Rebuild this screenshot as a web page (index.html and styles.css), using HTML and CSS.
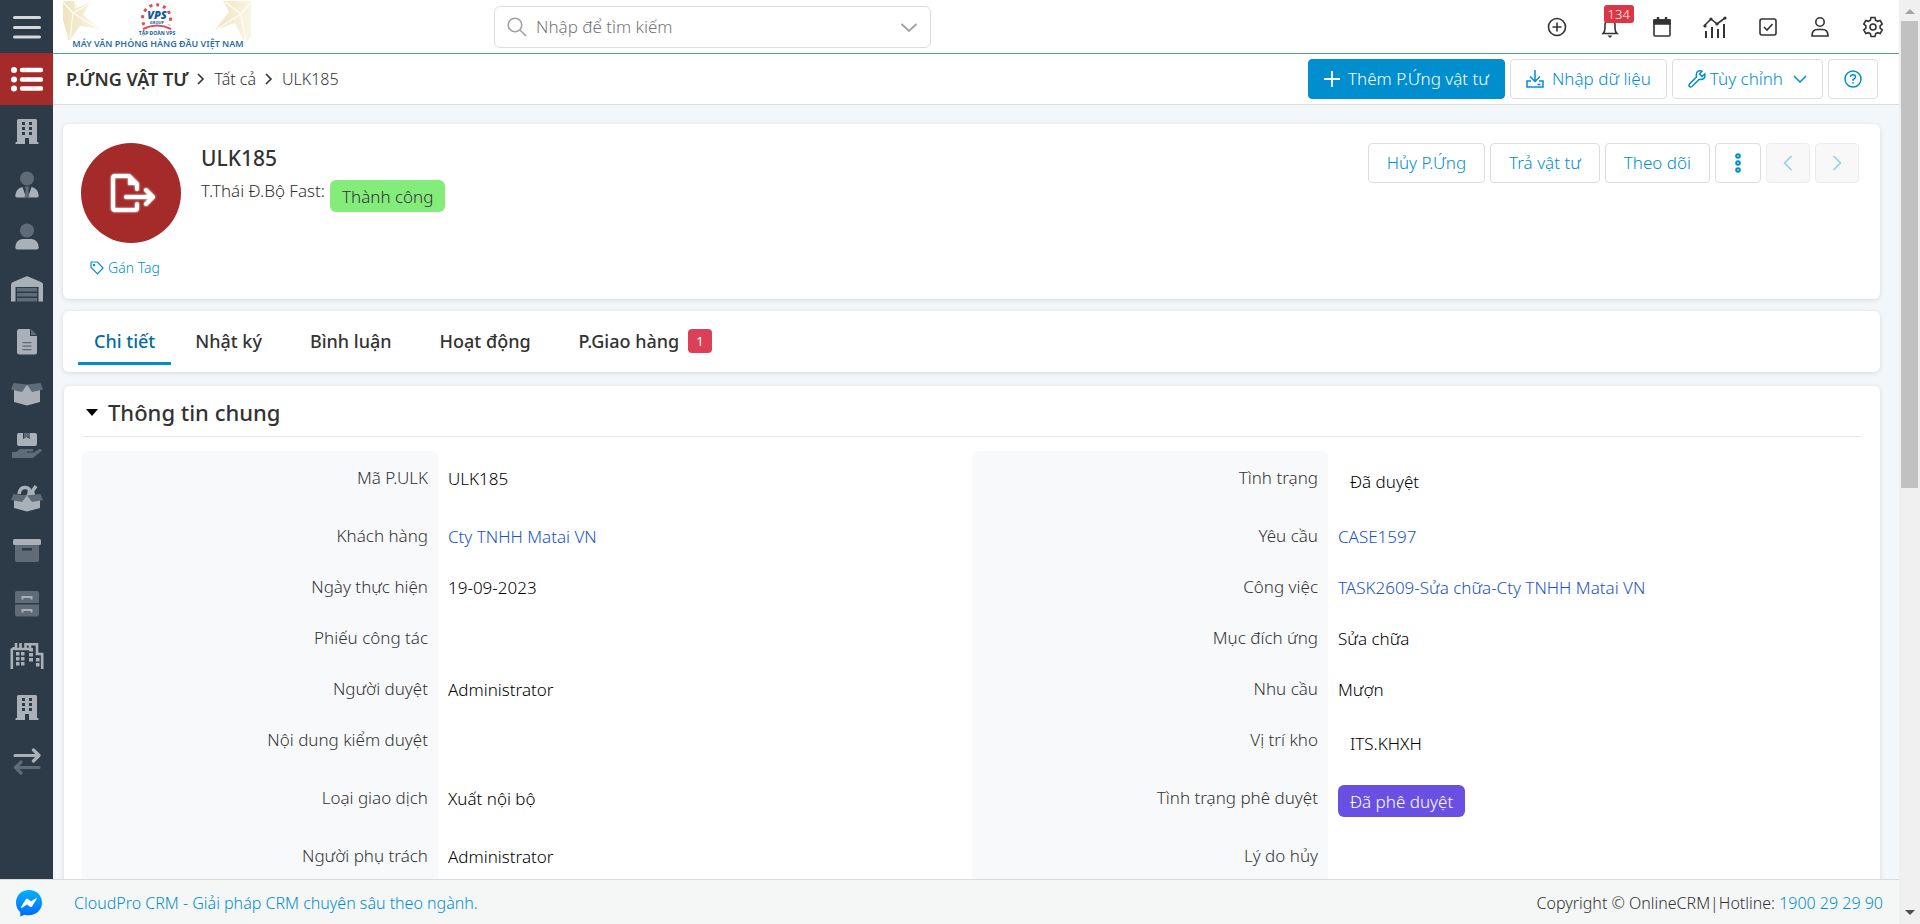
FILE: index.html
```html
<!DOCTYPE html>
<html lang="vi">
<head>
<meta charset="utf-8">
<meta name="viewport" content="width=device-width, initial-scale=1">
<title>ULK185 - P.Ứng vật tư</title>
<link rel="stylesheet" href="styles.css">
</head>
<body>
<svg class="sprite" aria-hidden="true">
  <symbol id="i-building" viewBox="0 0 24 28"><path fill="#a9b0b8" d="M2 2.500q0-1.500 1.500-1.500h17q1.500 0 1.500 1.500V24h1.500v2H14v-6h-4v6H.5v-2H2z"/><path fill="#2d3b49" d="M7 4h3v3H7zM14 4h3v3h-3zM7 9h3v3H7zM14 9h3v3h-3zM7 14h3v3H7zM14 14h3v3h-3z"/></symbol>
  <symbol id="i-tie" viewBox="0 0 24 28"><circle cx="12" cy="7.500" r="7" fill="#5f6b77"/><path fill="#a9b0b8" d="M7.500 16 11 26.500H2q-2 0-1.700-2Q1 17 7.500 16zM16.500 16 13 26.500h9q2 0 1.700-2Q23 17 16.500 16z"/><path fill="#5f6b77" d="M9.500 15.500h5l-1.300 3.500 1.300 7.500h-5l1.300-7.500z"/></symbol>
  <symbol id="i-user" viewBox="0 0 24 28"><circle cx="12" cy="7.500" r="7" fill="#5f6b77"/><path fill="#a9b0b8" d="M7 16h10q6.500 1 6.700 8.500 0 2-2 2H2.300q-2 0-2-2Q.5 17 7 16z"/></symbol>
  <symbol id="i-warehouse" viewBox="0 0 34 28"><path fill="#a9b0b8" d="M1 9.500Q1 8 2.500 7.300L16 1.500q1-.4 2 0l13.500 5.800Q33 8 33 9.500V26.500h-4.500V12h-23v14.500H1z"/><path fill="#5f6b77" d="M7 13h20v3.500H7zM7 18h20v3.500H7zM7 23h20v3.500H7z"/></symbol>
  <symbol id="i-file" viewBox="0 0 20 28"><path fill="#a9b0b8" d="M2.500 1H13v7h7v16.500q0 2-2 2H2.500q-2.500 0-2.500-2V3Q0 1 2.500 1z"/><path fill="#5f6b77" d="M14 1l6 6h-6zM5.500 14h9v1.200h-9zM5.500 17.500h9v1.200h-9zM5.500 21h9v1.200h-9z"/></symbol>
  <symbol id="i-box-open" viewBox="0 0 32 24"><path fill="#a9b0b8" d="M3 5l13-2 13 2v15l-13 3.500L3 20z"/><path fill="#5f6b77" d="M2.500 1 16 2.500l-5 7.500L0 7.500zM29.500 1 16 2.500 21 10l11-2.500z"/></symbol>
  <symbol id="i-hand" viewBox="0 0 30 28"><path fill="#a9b0b8" d="M6 1h5v6l3.500-2L18 7V1h5q2 0 2 2v9q0 2-2 2H7q-2 0-2-2V3q0-1 1-2z"/><path fill="#5f6b77" d="M12 1h6v5l-3-1.500L12 6zM0 20h4l4-3h12q2 .5 1 2.500h-6v1h7l5-3.500q2.500-.5 3 1.500L21 26H0z"/></symbol>
  <symbol id="i-box-full" viewBox="0 0 32 28"><path fill="#a9b0b8" d="M3 12l13-2 13 2v11l-13 3.500L3 23z"/><path fill="none" stroke="#a9b0b8" stroke-width="3.500" d="M8 9q1-7 6.500-6.500T18 8.500h4Q21 5 23 4l2-3"/><path fill="#5f6b77" d="M2.500 9 16 10.500l-5 6.500L0 15zM29.500 9 16 10.500 21 17l11-2z"/></symbol>
  <symbol id="i-archive" viewBox="0 0 28 26"><path fill="#5f6b77" d="M2 7h24v15q0 2-2 2H4q-2 0-2-2z"/><rect width="28" height="6" y="1" rx="1.500" fill="#a9b0b8"/><path fill="#2d3b49" d="M9 10h10v2.500H9z"/></symbol>
  <symbol id="i-cabinet" viewBox="0 0 24 28"><path fill="#5f6b77" d="M2 1h20q2 0 2 2v10H0V3q0-2 2-2zM0 14.500h24V24q0 2.500-2 2.500H2q-2 0-2-2.500z"/><path fill="none" stroke="#a9b0b8" stroke-width="2" d="M7.500 9.500V7h9v2.500M7.500 22.500V20h9v2.500"/></symbol>
  <symbol id="i-city" viewBox="0 0 34 28"><path fill="none" stroke="#a9b0b8" stroke-width="2.600" d="M1.800 27V7.500l2-1V5M6 1v6h14V2.300h7V12h5.200v15M10.500 1v5M15.500 6V2.300H20"/><path fill="#a9b0b8" d="M6 10h3.500v3.500H6zM11 10h3.500v3.500H11zM6 15h3.500v3.500H6zM11 15h3.500v3.500H11zM6 20h3.500v3.500H6zM11 20h3.500v3.500H11zM19 6h4v3.500h-4zM19 11h4v3.500h-4zM19 16h4v3.500h-4zM26 16h3.500v3.500H26zM26 21h3.500v3.500H26z"/></symbol>
  <symbol id="i-exchange" viewBox="0 0 28 28"><path fill="none" stroke="#a9b0b8" stroke-width="3.200" stroke-linecap="round" stroke-linejoin="round" d="M2 8.500h23.500M20.500 3l5.500 5.500-5.500 5.500"/><path fill="none" stroke="#5f6b77" stroke-width="3.200" stroke-linecap="round" stroke-linejoin="round" d="M26 20.500H2.500M8 15l-5.500 5.500L8 26"/></symbol>
</svg>

<div class="app">
  <div class="workspace">
    <aside class="sidebar">
      <button class="menu-button" type="button" aria-label="Menu"><svg viewBox="0 0 28 24" width="28" height="24"><path stroke="#d5d8db" stroke-width="3" stroke-linecap="round" d="M1.500 2.500h25M1.500 12.500h25M1.500 22h25"/></svg></button>
      <a class="module-active" href="#" aria-label="P.Ứng vật tư"><svg viewBox="0 0 32 26" width="32" height="26"><path stroke="#fff" stroke-width="4.400" stroke-linecap="round" d="M11 4h19M11 13.500h19M11 22.500h19"/><g fill="#fff"><circle cx="3" cy="4" r="3"/><circle cx="3" cy="13.500" r="3"/><circle cx="3" cy="22.500" r="3"/></g></svg></a>
      <nav class="modules" aria-label="Phân hệ">
        <a href="#" aria-label="Công ty"><svg width="24" height="28"><use href="#i-building"/></svg></a>
        <a href="#" aria-label="Đầu mối"><svg width="24" height="28"><use href="#i-tie"/></svg></a>
        <a href="#" aria-label="Người liên hệ"><svg width="24" height="28"><use href="#i-user"/></svg></a>
        <a href="#" aria-label="Kho"><svg width="34" height="28"><use href="#i-warehouse"/></svg></a>
        <a href="#" aria-label="Tài liệu"><svg width="20" height="28"><use href="#i-file"/></svg></a>
        <a href="#" aria-label="Sản phẩm"><svg width="32" height="24"><use href="#i-box-open"/></svg></a>
        <a href="#" aria-label="Giao hàng"><svg width="30" height="28"><use href="#i-hand"/></svg></a>
        <a href="#" aria-label="Vật tư"><svg width="32" height="28"><use href="#i-box-full"/></svg></a>
        <a href="#" aria-label="Lưu trữ"><svg width="28" height="26"><use href="#i-archive"/></svg></a>
        <a href="#" aria-label="Hồ sơ"><svg width="24" height="28"><use href="#i-cabinet"/></svg></a>
        <a href="#" aria-label="Chi nhánh"><svg width="34" height="28"><use href="#i-city"/></svg></a>
        <a href="#" aria-label="Tòa nhà"><svg width="24" height="28"><use href="#i-building"/></svg></a>
        <a href="#" aria-label="Luân chuyển"><svg width="28" height="28"><use href="#i-exchange"/></svg></a>
      </nav>
    </aside>

    <main class="main">
      <header class="topbar">
        <a class="logo" href="#" aria-label="VPS">
          <svg viewBox="0 0 188 50" width="188" height="50">
            <defs><linearGradient id="gold"><stop offset="0" stop-color="#eee3be"/><stop offset="1" stop-color="#faf6e6"/></linearGradient></defs>
            <path fill="#fbf8ea" d="M0 1h14v8L0 16zM174 1h14v22l-14-10z"/>
            <path fill="url(#gold)" d="M0 1h11l1 8 15-7-7 13 17 14-20-3-11 15L0 20z"/>
            <path fill="url(#gold)" d="M188 1h-28l6 11-14 18 20-7 10 21 6-8z"/>
            <path fill="none" stroke="#fffdf4" stroke-width="1.200" d="M10 13 0 2M10 13l16-9M10 13l24 15M10 13 7 38M178 14l10-12M178 14 162 2M178 14l-24 15M178 14l5 28"/>
            <path fill="none" stroke="#dc4d59" stroke-width="3" stroke-dasharray="3 4" d="M81 25a14 14 0 1 1 25 0"/>
            <path fill="none" stroke="#e04b57" stroke-width="2" d="M80 29q14-7 28 0"/>
            <text class="logo-vps" x="94" y="19" text-anchor="middle">VPS</text>
            <text class="logo-group" x="94" y="24" text-anchor="middle">GROUP</text>
            <text class="logo-tap" x="94" y="35" text-anchor="middle">TẬP ĐOÀN VPS</text>
            <text class="logo-slogan" x="95" y="47" text-anchor="middle">MÁY VĂN PHÒNG HÀNG ĐẦU VIỆT NAM</text>
          </svg>
        </a>
        <form class="search" role="search">
          <svg viewBox="0 0 20 20" width="20" height="20"><g fill="none" stroke="#a0a0a0" stroke-width="1.600"><circle cx="8" cy="8" r="6.800"/><path d="M13 13l6 6"/></g></svg>
          <input type="search" aria-label="Tìm kiếm" placeholder="Nhập để tìm kiếm">
          <button type="button" aria-label="Mở rộng"><svg viewBox="0 0 18 10" width="18" height="10"><path fill="none" stroke="#a0a0a0" stroke-width="1.800" d="M1.500 1 9 8l7.500-7"/></svg></button>
        </form>
        <div class="tools">
          <button type="button" aria-label="Thêm nhanh"><svg viewBox="0 0 24 24" width="24" height="24"><circle cx="12" cy="12" r="8.500"/><path d="M12 7.500v9M7.500 12h9"/></svg></button>
          <button type="button" aria-label="Thông báo"><svg viewBox="0 0 24 24" width="24" height="24"><path d="M12 2v2M5 18.500h14q-2-2-2-5V9.500a5 5 0 0 0-10 0v4q0 3-2 5z"/><path fill="#333" stroke="none" d="M9.500 20.500h5l-2.500 2.500z"/></svg><span class="count">134</span></button>
          <button type="button" aria-label="Lịch"><svg viewBox="0 0 24 24" width="24" height="24"><rect x="4" y="5" width="16" height="16" rx="1"/><path fill="#333" d="M4 5h16v4H4z"/><path stroke-width="2.400" d="M8 2v4M16 2v4"/></svg></button>
          <button type="button" aria-label="Báo cáo"><svg viewBox="0 0 24 24" width="24" height="24"><path d="M1 11 8 4l6 5 8-6"/><path stroke-width="2" d="M3 16v7M9 12v11M15 14v9M21 9v14"/><g fill="#333" stroke="none"><circle cx="2" cy="11" r="1.600"/><circle cx="8" cy="4" r="1.600"/><circle cx="14" cy="9" r="1.600"/><circle cx="22" cy="3" r="1.600"/></g></svg></button>
          <button type="button" aria-label="Công việc"><svg viewBox="0 0 24 24" width="24" height="24"><rect x="4" y="4" width="16" height="16" rx="2"/><path d="m8 12 3 3 5.500-6"/></svg></button>
          <button type="button" aria-label="Tài khoản"><svg viewBox="0 0 24 24" width="24" height="24"><circle cx="12" cy="7" r="4.200"/><path d="M4 21q0-6.500 5.500-6.500h5Q20 14.500 20 21z"/></svg></button>
          <button type="button" aria-label="Cài đặt"><svg viewBox="0 0 24 24" width="24" height="24"><circle cx="12" cy="12" r="3"/><path d="M10 2.500h4l.6 2.700 1.900 1.100 2.700-.8 2 3.500-2.100 1.900v2.200l2.100 1.900-2 3.500-2.700-.8-1.900 1.100-.6 2.700h-4l-.6-2.700-1.900-1.100-2.700.8-2-3.500 2.100-1.900v-2.200L2.800 9l2-3.500 2.700.8 1.900-1.100z"/></svg></button>
        </div>
      </header>

      <div class="pagebar">
        <nav class="crumbs" aria-label="Breadcrumb">
          <a class="crumb-module" href="#">P.ỨNG VẬT TƯ</a>
          <svg viewBox="0 0 8 14" width="8" height="14"><path d="m1 2 5 5-5 5"/></svg>
          <a href="#">Tất cả</a>
          <svg viewBox="0 0 8 14" width="8" height="14"><path d="m1 2 5 5-5 5"/></svg>
          <span>ULK185</span>
        </nav>
        <div class="actions">
          <button class="btn btn-primary" type="button"><svg viewBox="0 0 16 16" width="16" height="16"><path stroke-width="1.800" d="M8 0v16M0 8h16"/></svg>Thêm P.Ứng vật tư</button>
          <button class="btn" type="button"><svg viewBox="0 0 18 18" width="18" height="18"><path d="M9 0v11M4 6.500l5 5 5-5M5 11H1v6h16v-6h-4"/><path d="M11.500 14.500h3"/></svg>Nhập dữ liệu</button>
          <button class="btn btn-tools" type="button"><svg viewBox="0 0 18 18" width="18" height="18"><path d="M16.800 4 14 6.500 11.500 4 14 1.200Q9-.5 8.300 4.500L8.500 7 1.500 14q-1 1.500 0 2.500t2.500 0l7-7Q18 10 16.800 4z"/></svg>Tùy chỉnh<svg class="chevron" viewBox="0 0 14 8" width="14" height="8"><path d="m1 1 6 6 6-6"/></svg></button>
          <button class="btn" type="button" aria-label="Trợ giúp"><svg viewBox="0 0 18 18" width="18" height="18"><circle cx="9" cy="9" r="8"/><path d="M6.500 7Q6.700 4.800 9 4.800T11.500 7Q11.500 8.500 9 9.500v1.200M9 12.300v1.500"/></svg></button>
        </div>
      </div>

      <div class="content">
        <section class="card record">
          <div class="portrait">
            <div class="avatar"><svg viewBox="0 0 46 42" width="46" height="42"><g fill="none" stroke="#fff" stroke-width="4" stroke-linecap="round" stroke-linejoin="round"><path d="M28 17v-5L20 4H6Q4 4 4 6v30q0 2 2 2h20q2 0 2-2v-4"/><path d="M17 25h26M37 18l7 7-7 7"/></g><path fill="#fff" d="M19 4v9h10z"/></svg></div>
            <button class="tag-link" type="button"><svg viewBox="0 0 14 14" width="14" height="14"><path d="M1 2q0-1 1-1h5.500L13 7 7.500 13 1 6.500z"/><circle cx="4" cy="4" r=".6"/></svg>Gán Tag</button>
          </div>
          <div class="summary">
            <h1>ULK185</h1>
            <p>T.Thái Đ.Bộ Fast: <span class="badge badge-success">Thành công</span></p>
          </div>
          <div class="actions">
            <button class="btn" type="button">Hủy P.Ứng</button>
            <button class="btn" type="button">Trả vật tư</button>
            <button class="btn" type="button">Theo dõi</button>
            <button class="btn btn-more" type="button" aria-label="Thêm"><svg viewBox="0 0 8 20" width="8" height="20"><g stroke-width="2"><circle cx="4" cy="3" r="1.800"/><circle cx="4" cy="10" r="1.800"/><circle cx="4" cy="17" r="1.800"/></g></svg></button>
            <button class="btn btn-pager" type="button" disabled aria-label="Trước"><svg viewBox="0 0 10 16" width="10" height="16"><path d="M8.500 1 1.500 8l7 7"/></svg></button>
            <button class="btn btn-pager" type="button" disabled aria-label="Sau"><svg viewBox="0 0 10 16" width="10" height="16"><path d="m1.500 1 7 7-7 7"/></svg></button>
          </div>
        </section>

        <nav class="card tabs" aria-label="Nội dung">
          <a class="tab tab-active" href="#">Chi tiết</a>
          <a class="tab" href="#">Nhật ký</a>
          <a class="tab" href="#">Bình luận</a>
          <a class="tab" href="#">Hoạt động</a>
          <a class="tab" href="#">P.Giao hàng<span class="tab-count">1</span></a>
        </nav>

        <section class="card details">
          <h2><button type="button"><svg viewBox="0 0 12 7" width="12" height="7"><path fill="#000" d="M0 0h12L6 7z"/></svg>Thông tin chung</button></h2>
          <table class="fields">
            <tbody>
              <tr><th scope="row">Mã P.ULK</th><td>ULK185</td><th scope="row">Tình trạng</th><td class="has-badge"><span class="badge">Đã duyệt</span></td></tr>
              <tr><th scope="row">Khách hàng</th><td><a href="#">Cty TNHH Matai VN</a></td><th scope="row">Yêu cầu</th><td><a href="#">CASE1597</a></td></tr>
              <tr><th scope="row">Ngày thực hiện</th><td>19-09-2023</td><th scope="row">Công việc</th><td><a href="#">TASK2609-Sửa chữa-Cty TNHH Matai VN</a></td></tr>
              <tr><th scope="row">Phiếu công tác</th><td></td><th scope="row">Mục đích ứng</th><td>Sửa chữa</td></tr>
              <tr><th scope="row">Người duyệt</th><td>Administrator</td><th scope="row">Nhu cầu</th><td>Mượn</td></tr>
              <tr><th scope="row">Nội dung kiểm duyệt</th><td></td><th scope="row">Vị trí kho</th><td class="has-badge"><span class="badge">ITS.KHXH</span></td></tr>
              <tr><th scope="row">Loại giao dịch</th><td>Xuất nội bộ</td><th scope="row">Tình trạng phê duyệt</th><td class="has-badge"><span class="badge badge-approved">Đã phê duyệt</span></td></tr>
              <tr><th scope="row">Người phụ trách</th><td>Administrator</td><th scope="row">Lý do hủy</th><td></td></tr>
            </tbody>
          </table>
        </section>
      </div>
    </main>
  </div>

  <footer class="footer">
    <a class="messenger" href="#" aria-label="Messenger"><svg viewBox="0 0 26 27" width="26" height="27"><defs><linearGradient id="msg" x1="0" y1="0" x2="0" y2="1"><stop offset="0" stop-color="#00b2ff"/><stop offset="1" stop-color="#006aff"/></linearGradient></defs><path fill="url(#msg)" d="M13 0C5.500 0 0 5.400 0 12.700c0 3.800 1.600 7.100 4.200 9.400L4.300 26.500l4.300-1.700c9.500 2.400 17.400-4 17.400-12.100C26 5.400 20.500 0 13 0z"/><path fill="#fff" d="m5 17 5-8q1-1 2 0l3 2.300 5.500-3.300q.5 0 .3.700L16 16.500q-1 1-2 .2L11 14.500 5.800 18q-1 .2-.8-1z"/></svg></a>
    <a href="#">CloudPro CRM - Giải pháp CRM chuyên sâu theo ngành.</a>
    <p class="copyright">Copyright © OnlineCRM|Hotline: <a href="#">1900 29 29 90</a></p>
  </footer>

  <div class="scrollbar" aria-hidden="true">
    <span class="arrow arrow-up"></span>
    <span class="thumb"></span>
    <span class="arrow arrow-down"></span>
  </div>
</div>
</body>
</html>
```
FILE: styles.css
```css
* { box-sizing: border-box; }

body {
  margin: 0;
  font-family: "Noto Sans", "Open Sans", sans-serif;
  font-size: 17px;
  font-weight: 350;
  line-height: 22px;
  color: #333;
}

a { color: inherit; text-decoration: none; }
button { font: inherit; color: inherit; background: none; border: 0; padding: 0; cursor: pointer; }
h1, h2, p { margin: 0; font-weight: 500; }
.sprite { display: none; }

.app {
  display: grid;
  grid-template-columns: minmax(0, 1fr) 21px;
  grid-template-rows: minmax(0, 1fr) auto;
  height: 100vh;
}
.workspace { display: flex; min-height: 0; }

/* Sidebar */
.sidebar { flex: 0 0 53px; display: flex; flex-direction: column; background: #2d3b49; overflow: hidden; }
.menu-button, .module-active, .modules a { display: flex; align-items: center; justify-content: center; }
.menu-button { flex: 0 0 53px; }
.module-active { flex: 0 0 52px; background: #a52a2a; }
.modules { flex: 0 0 682px; display: grid; grid-auto-rows: 1fr; padding-top: 1px; }

.main { flex: 1; min-width: 0; display: flex; flex-direction: column; background: #f3f7fa; }

/* Top bar */
.topbar {
  flex: none;
  display: flex;
  align-items: center;
  height: 54px;
  padding-left: 10px;
  background: #fff;
  border-bottom: 1px solid #48b07b;
}
.logo { display: flex; margin-bottom: 3px; }
.logo-vps { font: italic 800 11px "Open Sans", sans-serif; fill: #14599c; }
.logo-group { font: 700 4px "Open Sans", sans-serif; fill: #14599c; }
.logo-tap { font: 700 5px "Open Sans", sans-serif; fill: #14599c; }
.logo-slogan { font: 600 9px "Noto Sans", sans-serif; fill: #2a6da6; }
.search {
  flex: 0 1 437px;
  display: flex;
  align-items: center;
  gap: 9px;
  height: 42px;
  margin-left: 243px;
  padding: 0 12px;
  border: 1px solid #ddd;
  border-radius: 6px;
}
.search input { flex: 1; min-width: 0; border: 0; outline: 0; padding: 0; font: inherit; background: none; }
.search input::placeholder { color: #757575; }
.tools { display: flex; flex: 0 1 368px; margin-left: auto; }
.tools button { position: relative; flex: 1; display: flex; justify-content: center; }
.tools svg { fill: none; stroke: #333; stroke-width: 1.6; }
.count {
  position: absolute;
  left: 20px;
  top: -10px;
  padding: 0 4px;
  border-radius: 3px;
  background: #dc3545;
  color: #fff;
  font-size: 13px;
  line-height: 18px;
}

/* Breadcrumb bar */
.pagebar {
  flex: none;
  display: flex;
  align-items: center;
  justify-content: space-between;
  height: 51px;
  padding: 0 21px 0 13px;
  background: #fff;
  border-bottom: 1px solid #ddd;
}
.crumbs { display: flex; align-items: center; gap: 9px; font-size: 16px; }
.crumbs svg { fill: none; stroke: #333; stroke-width: 1.6; }
.crumb-module { font-size: 18px; font-weight: 600; }
.actions { display: flex; gap: 5px; }
.btn {
  display: flex;
  align-items: center;
  gap: 8px;
  height: 40px;
  padding: 0 15px;
  border: 1px solid #ddd;
  border-radius: 4px;
  background: #fff;
  color: #008ecf;
  white-space: nowrap;
}
.btn svg { fill: none; stroke: currentColor; stroke-width: 1.5; }
.btn-primary { background: #008ecf; border-color: #008ecf; color: #fff; }
.btn-tools { gap: 4px; }
.btn-tools .chevron { margin-left: 6px; }

/* Cards */
.content { flex: 1; min-height: 0; overflow: hidden; padding: 19px 19px 0 10px; }
.card { background: #fff; border-radius: 6px; box-shadow: 0 1px 5px rgba(0, 0, 0, .12); }
.record { display: flex; gap: 20px; padding: 19px 21px 20px 18px; }
.portrait { display: flex; flex-direction: column; align-items: center; gap: 14px; flex: 0 0 100px; }
.avatar { width: 100px; height: 100px; padding-left: 2px; border-radius: 50%; background: #a52a2a; display: flex; align-items: center; justify-content: center; }
.avatar svg { filter: drop-shadow(0 0 1px #fff); }
.tag-link { display: flex; align-items: center; gap: 4px; margin-right: 12px; color: #008ecf; font-size: 14px; }
.tag-link svg { fill: none; stroke: currentColor; stroke-width: 1.2; }
.summary { flex: 1; padding-top: 1px; }
.summary h1 { font-size: 21px; line-height: 28px; }
.summary p { display: flex; align-items: flex-start; gap: 5px; padding-top: 8px; font-weight: 350; }
.record .actions { align-items: flex-start; }
.record .btn { padding: 0 18px; }
.record .btn-pager { padding: 0 16px; background: #f8f8f8; border-color: #ececec; color: #8fcdea; }

.badge { display: inline-block; padding: 6px 12px 4px; border-radius: 6px; line-height: 22px; }
.badge-success { background: #83ec7b; color: #333; }
.badge-approved { background: #6950e3; color: #fff; }

.tabs { display: flex; margin-top: 12px; padding: 0 15px; height: 61px; }
.tab { display: flex; align-items: center; height: 54px; padding: 8px 24px 0; border-bottom: 3px solid transparent; font-size: 18px; font-weight: 500; }
.tab-active { padding: 8px 16px 0; border-color: #008ecf; color: #006ca5; }
.tab-count { margin-left: 9px; padding: 0 8px; border-radius: 4px; background: #dc4058; color: #fff; font-size: 13px; line-height: 24px; font-weight: 400; }

.details { margin: 14px 0 0 1px; padding: 10px 18px 24px; }
.details h2 { padding-bottom: 8px; border-bottom: 1px solid #e9e9e9; font-size: 22px; line-height: 32px; }
.details h2 button { display: flex; align-items: center; gap: 10px; padding-left: 4px; }

.fields { width: 100%; margin-top: 14px; table-layout: fixed; border-collapse: collapse; }
.fields th, .fields td { vertical-align: top; }
.fields th { width: 20%; padding: 16px 10px 13px; background: #f8f9fb; text-align: right; font-weight: 300; }
.fields td { width: 30%; padding: 17px 10px 12px; color: #000; }
.fields .has-badge { padding: 14px 10px 12px; }
.fields .has-badge .badge { display: block; width: max-content; }
.fields a { color: #1a53c5; }
.fields tr:first-child th { border-radius: 6px 6px 0 0; }

/* Footer */
.footer {
  display: flex;
  align-items: center;
  height: 45px;
  padding: 2px 16px 0;
  border-top: 1px solid #d8dbdd;
  background: #f5f7f7;
  font-size: 16px;
}
.footer a { color: #008ecf; }
.messenger { display: flex; margin-right: 32px; }
.copyright { margin-left: auto; font-weight: 350; }

/* Scroll track */
.scrollbar {
  grid-column: 2;
  grid-row: 1 / 3;
  display: flex;
  flex-direction: column;
  align-items: center;
  padding: 9px 2px;
  background: #f0f0f0;
}
.arrow { border: 5px solid transparent; }
.arrow-up { border-top: 0; border-bottom-color: #a3a3a3; }
.arrow-down { border-bottom: 0; border-top-color: #505050; margin-top: auto; }
.thumb { width: 100%; height: 467px; margin-top: 7px; background: #c1c1c1; }
```
